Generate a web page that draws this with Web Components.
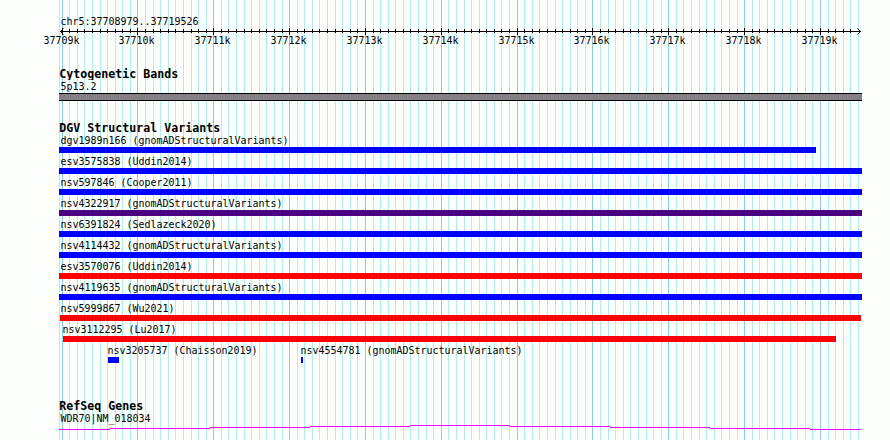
<!DOCTYPE html>
<html lang="en">
<head>
<meta charset="utf-8">
<title>chr5:37708979..37719526</title>
<style>
    body {
        margin: 0;
        background: #fdfffc;
    }
</style>
</head>
<body>
<genome-browser></genome-browser>
<script>
const RULER = { left: 59, right: 862, first: 62.1, kb: 75.84 };

const variants = [
    [{ name: 'dgv1989n166 (gnomADStructuralVariants)', start: 59, end: 816, color: '#0000ff' }],
    [{ name: 'esv3575838 (Uddin2014)', start: 59, end: 862, color: '#0000ff' }],
    [{ name: 'nsv597846 (Cooper2011)', start: 59, end: 862, color: '#0000ff' }],
    [{ name: 'nsv4322917 (gnomADStructuralVariants)', start: 59, end: 862, color: '#4b0082' }],
    [{ name: 'nsv6391824 (Sedlazeck2020)', start: 59, end: 862, color: '#0000ff' }],
    [{ name: 'nsv4114432 (gnomADStructuralVariants)', start: 59, end: 862, color: '#0000ff' }],
    [{ name: 'esv3570076 (Uddin2014)', start: 59, end: 862, color: '#ff0000' }],
    [{ name: 'nsv4119635 (gnomADStructuralVariants)', start: 59, end: 862, color: '#0000ff' }],
    [{ name: 'nsv5999867 (Wu2021)', start: 60, end: 861, color: '#ff0000' }],
    [{ name: 'nsv3112295 (Lu2017)', start: 63, end: 836, color: '#ff0000' }],
    [
        { name: 'nsv3205737 (Chaisson2019)', start: 108, end: 119, color: '#0000ff' },
        { name: 'nsv4554781 (gnomADStructuralVariants)', start: 301, end: 303, color: '#0000ff' },
    ],
];

// Bitmap style lettering on a fixed 6px (regular) or 7px (bold) advance.
function label(text, x, y, bold) {
    const advance = bold ? 7 : 6;
    return `<text x="${x}" y="${y}" textLength="${text.length * advance}" lengthAdjust="spacingAndGlyphs"
        class="${bold ? 'bold' : ''}">${text}</text>`;
}

const textStyle = `
    text {
        font-family: "DejaVu Sans Mono", monospace;
        font-size: 11px;
        fill: #000;
        white-space: pre;
    }
    .bold {
        font-size: 11.5px;
        font-weight: bold;
    }
`;

function tickPositions() {
    const ticks = [{ x: RULER.left, major: false }];
    for (let i = 0; i <= 105; i++) {
        ticks.push({ x: Math.floor(RULER.first + i * RULER.kb / 10), major: i % 10 === 0 });
    }
    return ticks;
}

class GridLines extends HTMLElement {
    connectedCallback() {
        this.attachShadow({ mode: 'open' }).innerHTML = `
            <style>
                :host { display: block; }
                svg { display: block; }
            </style>
            <svg width="890" height="440" shape-rendering="crispEdges">
                ${tickPositions().map(t => `<rect x="${t.x}" y="0" width="1" height="440"
                    fill="${t.major ? '#87ceeb' : '#afeeee'}"/>`).join('')}
            </svg>
        `;
    }
}
customElements.define('grid-lines', GridLines);

class RulerScale extends HTMLElement {
    connectedCallback() {
        const ticks = tickPositions().slice(1, -1);
        const majors = ticks.filter(t => t.major);
        this.attachShadow({ mode: 'open' }).innerHTML = `
            <style>
                :host { display: block; }
                svg { display: block; }
                ${textStyle}
            </style>
            <svg width="890" height="68">
                ${label('chr5:37708979..37719526', 60.5, 25)}
                <g shape-rendering="crispEdges">
                    <rect x="60" y="31" width="801" height="1"/>
                    ${ticks.map(t => `<rect x="${t.x}" y="${t.major ? 28 : 29}" width="1" height="${t.major ? 7 : 4}"/>`).join('')}
                </g>
                <path d="M63.5 28.5L60.5 31.5L63.5 34.5M857.5 28.5L860.5 31.5L857.5 34.5" fill="none" stroke="#000"/>
                ${majors.map((t, i) => label(`${37709 + i}k`, t.x - 18.5, 44)).join('')}
            </svg>
        `;
    }
}
customElements.define('ruler-scale', RulerScale);

class TrackSection extends HTMLElement {
    connectedCallback() {
        this.attachShadow({ mode: 'open' }).innerHTML = `
            <style>
                :host { display: block; }
                svg { display: block; }
                ${textStyle}
            </style>
            <svg width="890" height="12">${label(this.getAttribute('heading'), 59.3, 10, true)}</svg>
            <slot></slot>
        `;
    }
}
customElements.define('track-section', TrackSection);

class CytoBand extends HTMLElement {
    connectedCallback() {
        this.attachShadow({ mode: 'open' }).innerHTML = `
            <style>
                :host { display: block; }
                svg { display: block; }
                ${textStyle}
            </style>
            <svg width="890" height="42">
                ${label('5p13.2', 60.5, 10)}
                <g shape-rendering="crispEdges">
                    <rect x="59" y="13" width="803" height="8"/>
                    <rect x="59" y="14" width="803" height="6" fill="#848084"/>
                </g>
            </svg>
        `;
    }
}
customElements.define('cyto-band', CytoBand);

class VariantRow extends HTMLElement {
    connectedCallback() {
        this.attachShadow({ mode: 'open' }).innerHTML = `
            <style>
                :host { display: block; }
                svg { display: block; }
                ${textStyle}
            </style>
            <svg width="890" height="21">
                ${this.features.map(f => `
                    <rect x="${f.start}" y="13" width="${f.end - f.start}" height="6" fill="${f.color}"/>
                    ${label(f.name, Math.max(f.start - 0.5, 60.5), 10)}
                `).join('')}
            </svg>
        `;
    }
}
customElements.define('variant-row', VariantRow);

class GeneTrack extends HTMLElement {
    connectedCallback() {
        this.attachShadow({ mode: 'open' }).innerHTML = `
            <style>
                :host { display: block; }
                svg { display: block; }
                ${textStyle}
            </style>
            <svg width="890" height="28">
                ${label('WDR70|NM_018034', 60.5, 10)}
                <path d="M59 17.5H110M110 16.5H210M210 15.5H310M310 14.5H410M410 13.5H510M510 14.5H610M610 15.5H710M710 16.5H810M810 17.5H861" stroke="#ff00ff"/>
            </svg>
        `;
    }
}
customElements.define('gene-track', GeneTrack);

class GenomeBrowser extends HTMLElement {
    connectedCallback() {
        this.attachShadow({ mode: 'open' }).innerHTML = `
            <style>
                :host {
                    display: grid;
                    width: 890px;
                    height: 440px;
                    overflow: hidden;
                }
                grid-lines, main { grid-area: 1 / 1; }
                .variants { height: 278px; }
            </style>
            <grid-lines></grid-lines>
            <main>
                <ruler-scale></ruler-scale>
                <track-section heading="Cytogenetic Bands"><cyto-band></cyto-band></track-section>
                <track-section class="variants" heading="DGV Structural Variants"></track-section>
                <track-section heading="RefSeq Genes"><gene-track></gene-track></track-section>
            </main>
        `;
        const section = this.shadowRoot.querySelector('.variants');
        variants.forEach(features => {
            const row = document.createElement('variant-row');
            row.features = features;
            section.appendChild(row);
        });
    }
}
customElements.define('genome-browser', GenomeBrowser);
</script>
</body>
</html>
